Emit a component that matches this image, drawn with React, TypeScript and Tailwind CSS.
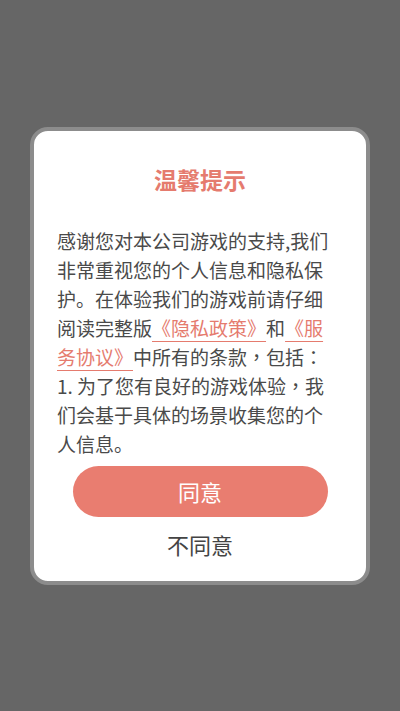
import React from 'react';

const font = { fontFamily: '"Noto Sans CJK SC", "Noto Sans", sans-serif' };

const PrivacyLink: React.FC<{ children: React.ReactNode }> = ({ children }) => (
  <span className="text-[#e57b6e] underline decoration-[1px] underline-offset-[5px]">{children}</span>
);

// centred full-width punctuation, as in the reference
const Punct: React.FC<{ children: React.ReactNode }> = ({ children }) => (
  <span style={{ fontFamily: '"Noto Sans CJK TC", sans-serif' }}>{children}</span>
);

const App: React.FC = () => {
  return (
    <div className="w-full h-[711px] bg-[#666666] flex items-center justify-center" style={font}>
      <div className="w-[340px] border-[4px] border-[#8c8c8c] rounded-[18px] bg-white flex flex-col items-center pt-[32px] pb-[22px]">
        <h1 className="text-[23px] leading-[32px] font-bold text-[#e57b6e]">温馨提示</h1>

        <div className="mt-[31px] w-full px-[23px] text-[19px] leading-[29px] text-[#4a4a4a] whitespace-nowrap">
          <div>感谢您对本公司游戏的支持,我们</div>
          <div>非常重视您的个人信息和隐私保</div>
          <div>护。在体验我们的游戏前请仔细</div>
          <div>
            阅读完整版<PrivacyLink>《隐私政策》</PrivacyLink>和<PrivacyLink>《服</PrivacyLink>
          </div>
          <div>
            <PrivacyLink>务协议》</PrivacyLink>中所有的条款<Punct>，</Punct>包括<Punct>：</Punct>
          </div>
          <div>1. 为了您有良好的游戏体验<Punct>，</Punct>我</div>
          <div>们会基于具体的场景收集您的个</div>
          <div>人信息。</div>
        </div>

        <button className="mt-[8px] w-[255px] h-[51px] rounded-full bg-[#e97d70] text-white text-[22px]">
          同意
        </button>
        <button className="mt-[12px] h-[30px] text-[22px] leading-[30px] text-[#444444]">
          不同意
        </button>
      </div>
    </div>
  );
};

export default App;
